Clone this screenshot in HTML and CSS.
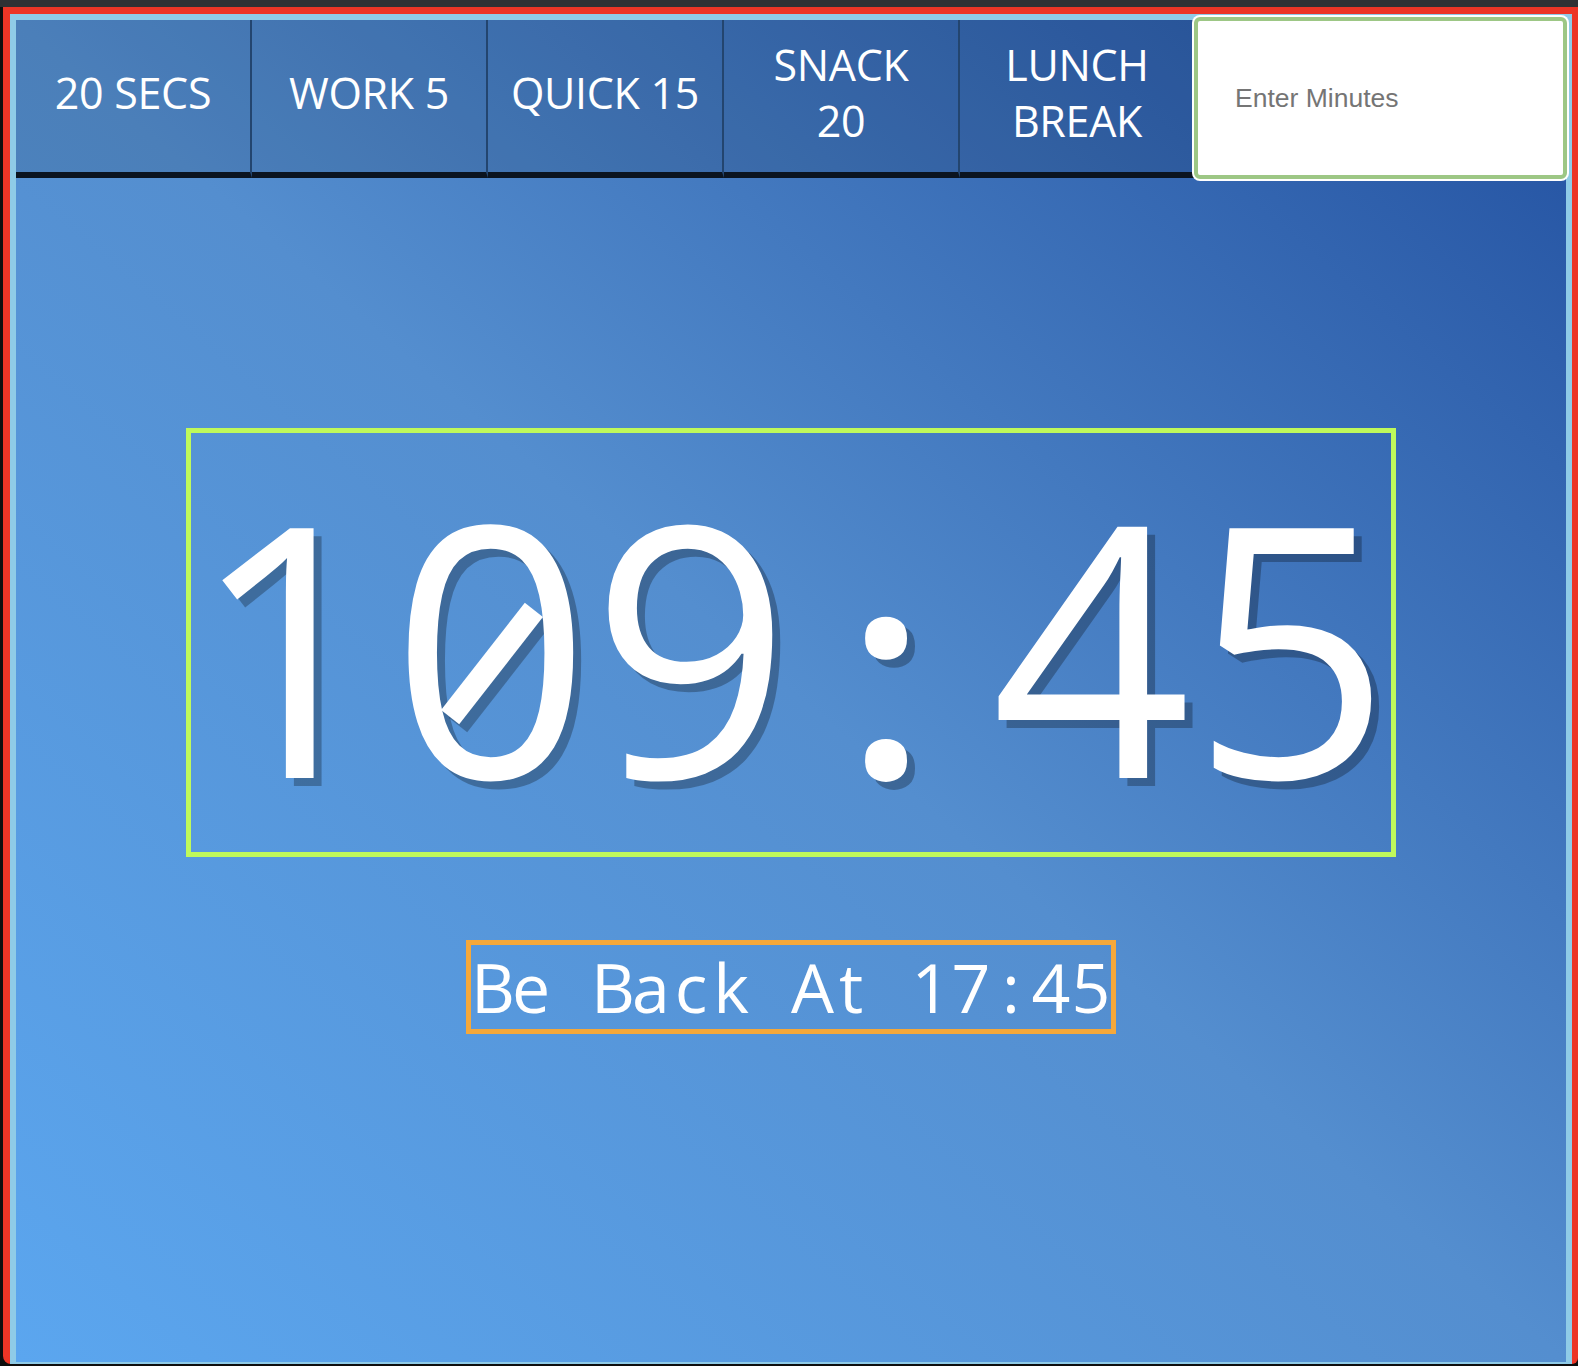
FILE: index.html
```html
<!DOCTYPE html>
<html lang="en">
<head>
<meta charset="utf-8">
<title>Be Back Timer</title>
<link rel="stylesheet" href="styles.css">
</head>
<body>
<div class="window">
  <div class="frame">
    <div class="page">
      <nav class="presets">
        <button class="preset">20 SECS</button>
        <button class="preset">WORK 5</button>
        <button class="preset">QUICK 15</button>
        <button class="preset">SNACK<br>20</button>
        <button class="preset">LUNCH<br>BREAK</button>
        <input class="minutes" type="text" placeholder="Enter Minutes">
      </nav>
      <main class="stage">
        <div class="timer">1<span class="zero">0</span>9<span class="colon">:</span>45</div>
        <div class="back"><span class="ch">B</span><span class="ch">e</span><span class="ch">&nbsp;</span><span class="ch">B</span><span class="ch">a</span><span class="ch">c</span><span class="ch">k</span><span class="ch">&nbsp;</span><span class="ch">A</span><span class="ch">t</span><span class="ch">&nbsp;</span><span class="ch">1</span><span class="ch">7</span><span class="ch">:</span><span class="ch">4</span><span class="ch">5</span></div>
      </main>
    </div>
  </div>
</div>
</body>
</html>
```

FILE: styles.css
```css
html, body {
  margin: 0;
  padding: 0;
}

body {
  height: 1366px;
  overflow: hidden;
  background: linear-gradient(#303134 0, #303134 7px, #0e0e0e 7px);
  font-family: "Open Sans", "Noto Sans", sans-serif;
}

.window {
  margin: 7px 0 0 3px;
  width: 1575px;
  box-sizing: border-box;
  border-style: solid;
  border-color: #ec3526;
  border-width: 7px 6px 0 7px;
  border-radius: 0 0 6px 8px;
}

.frame {
  border-style: solid;
  border-color: #8fcbe7;
  border-width: 6px 6px 2px 6px;
}

.page {
  height: 1342px;
  background: linear-gradient(to top right, #5ba6ef 0%, #548ecf 50%, #2250a0 100%);
}

.presets {
  display: flex;
  align-items: flex-start;
}

.preset {
  flex: 0 0 236px;
  width: 236px;
  height: 158px;
  box-sizing: border-box;
  margin: 0;
  padding: 0 0 6px;
  border: 0;
  border-right: 2px solid #23456f;
  border-bottom: 6px solid #0b1420;
  background: rgba(0, 0, 0, 0.1);
  color: #ffffff;
  font-family: "Open Sans", "Noto Sans", sans-serif;
  font-weight: 400;
  font-size: 43px;
  line-height: 56px;
  letter-spacing: -0.3px;
  text-align: center;
  cursor: pointer;
}

.minutes {
  position: relative;
  flex: 0 0 373px;
  width: 373px;
  height: 162px;
  box-sizing: border-box;
  margin: -3px 0 -1px -2px;
  padding: 0 0 0 37px;
  border: 4px solid #9dc785;
  border-radius: 6px;
  box-shadow: 0 0 0 2px #ffffff;
  background: #ffffff;
  color: #333333;
  font-family: "Liberation Sans", Arial, sans-serif;
  font-size: 26.5px;
  outline: none;
}

.minutes::placeholder {
  color: #757575;
  opacity: 1;
}

.stage {
  display: flex;
  flex-direction: column;
  align-items: center;
  padding-top: 250px;
}

.timer {
  position: relative;
  z-index: 0;
  height: 429px;
  box-sizing: border-box;
  border: 5px solid #bff95b;
  color: #ffffff;
  font-family: "Open Sans", "Noto Sans", sans-serif;
  font-weight: 400;
  font-size: 350px;
  line-height: 419px;
  white-space: nowrap;
  text-shadow: 8px 8px 0 rgba(0, 0, 0, 0.27);
}

.colon {
  display: inline-block;
  width: 200px;
  box-sizing: border-box;
  padding-right: 10px;
  text-align: center;
  font-size: 292px;
  font-weight: 600;
  line-height: 0;
}

.zero {
  position: relative;
  display: inline-block;
}

.zero::before,
.zero::after {
  content: "";
  position: absolute;
  left: 33px;
  top: 219px;
  width: 136px;
  height: 23px;
}

.zero::after {
  background: #ffffff;
  transform: rotate(-52deg);
}

.zero::before {
  z-index: -1;
  background: rgba(0, 0, 0, 0.27);
  transform: translate(8px, 8px) rotate(-52deg);
}

.back {
  margin-top: 83px;
  border: 5px solid #f5a83a;
  color: #ffffff;
  font-family: "Open Sans", "Noto Sans", sans-serif;
  font-size: 68px;
  line-height: 84px;
  white-space: nowrap;
}

.ch {
  display: inline-block;
  width: 40px;
  text-align: center;
}
```
